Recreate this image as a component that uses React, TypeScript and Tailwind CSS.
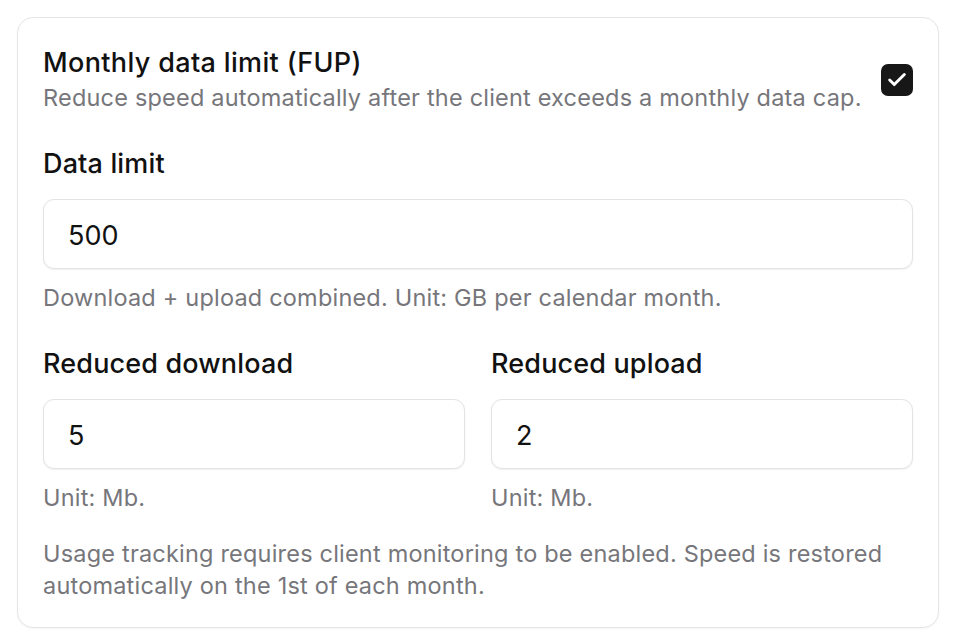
import { Check } from "lucide-react";

function Field({ label, value, hint }: { label: string; value: string; hint: string }) {
  return (
    <div className="flex flex-col">
      <label className="text-[27px] leading-[32px] font-medium tracking-[0.15px] text-[#111111]">{label}</label>
      <div className="mt-[19px] h-[70px] rounded-[11px] border border-[#e3e3e3] bg-white shadow-[0_1px_2px_rgba(0,0,0,0.06)] flex items-center px-[24px] pt-[5px]">
        <span className="text-[27px] text-[#111111]">{value}</span>
      </div>
      <p className="mt-[14px] text-[23.5px] leading-[30px] tracking-[0.2px] text-[#76767b]">{hint}</p>
    </div>
  );
}

export default function App() {
  return (
    <div className="min-h-screen bg-white p-[17px]" style={{ fontFamily: "Inter, 'Noto Sans', sans-serif" }}>
      <div className="rounded-[16px] border border-[#e5e5e5] bg-white px-[25px] pt-[29px] pb-[25px] shadow-[0_1px_2px_rgba(0,0,0,0.04)]">
        {/* Header */}
        <div className="flex items-center justify-between">
          <div>
            <h2 className="text-[27px] leading-[32px] font-medium tracking-[0.35px] text-[#111111]">Monthly data limit (FUP)</h2>
            <p className="mt-[4px] text-[23.5px] leading-[30px] tracking-[0.2px] text-[#76767b]">
              Reduce speed automatically after the client exceeds a monthly data cap.
            </p>
          </div>
          <div className="w-[32px] h-[32px] rounded-[7px] bg-[#171717] flex items-center justify-center">
            <Check className="w-[22px] h-[22px] text-white" strokeWidth={3.2} />
          </div>
        </div>

        <div className="mt-[35px]">
          <Field label="Data limit" value="500" hint="Download + upload combined. Unit: GB per calendar month." />
        </div>

        <div className="mt-[35px] grid grid-cols-2 gap-[26px]">
          <Field label="Reduced download" value="5" hint="Unit: Mb." />
          <Field label="Reduced upload" value="2" hint="Unit: Mb." />
        </div>

        <p className="mt-[25px] text-[23.5px] leading-[32px] tracking-[0.2px] text-[#76767b]">
          Usage tracking requires client monitoring to be enabled. Speed is restored automatically on the 1st of each month.
        </p>
      </div>
    </div>
  );
}
